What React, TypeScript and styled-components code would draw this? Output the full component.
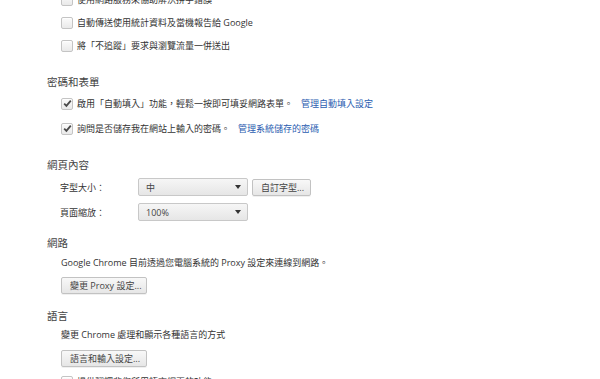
import styled, { createGlobalStyle } from "styled-components";

const GlobalStyle = createGlobalStyle`
  html, body {
    margin: 0;
    padding: 0;
    background: #fff;
    overflow: hidden;
  }
  body {
    font-family: "Open Sans", "Noto Sans CJK TC", sans-serif;
    color: #333;
  }
`;

const Page = styled.div`
  width: 600px;
  height: 379px;
  overflow: hidden;
`;

// content is scrolled a little, so the first row is cut at the top
const Scroller = styled.div`
  display: flex;
  flex-direction: column;
  margin-top: -12px;
  padding-left: 47px;
`;

const Section = styled.section`
  display: flex;
  flex-direction: column;
  margin-bottom: 14px;
`;

const Title = styled.h3`
  margin: 0;
  height: 16px;
  line-height: 16px;
  font-size: 10.5px;
  font-weight: normal;
  color: #444;
`;

const Body = styled.div<{ $top?: number }>`
  display: flex;
  flex-direction: column;
  margin-left: 14px;
  margin-top: ${(p) => p.$top ?? 0}px;
`;

const CheckList = styled.div<{ $gap?: number; $top?: number }>`
  display: flex;
  flex-direction: column;
  gap: ${(p) => p.$gap ?? 0}px;
  margin-top: ${(p) => p.$top ?? 0}px;
  margin-bottom: 3px;
  margin-left: 14px;
`;

const CheckRow = styled.label`
  display: flex;
  align-items: center;
  height: 23px;
  font-size: 9px;
  color: #333;
  white-space: nowrap;
`;

const Box = styled.span`
  position: relative;
  flex: none;
  width: 10px;
  height: 10px;
  margin-right: 4px;
  border: 1px solid #c4c4c4;
  border-radius: 2px;
  background: linear-gradient(#fbfbfb, #e9e9e9);
  box-shadow: inset 0 1px 1px rgba(255, 255, 255, 0.8);
`;

const Tick = styled.svg`
  position: absolute;
  left: 1px;
  top: 0px;
`;

const Link = styled.a`
  margin-left: 8px;
  color: #2a5db0;
  text-decoration: none;
`;

const FormRows = styled.div`
  display: flex;
  flex-direction: column;
  gap: 7px;
  margin-left: 13px;
  margin-top: 5px;
`;

const FormRow = styled.div`
  display: flex;
  align-items: center;
  height: 18px;
  gap: 4px;
  font-size: 9px;
`;

const Label = styled.span`
  width: 74px;
  color: #333;
`;

const Select = styled.div<{ $width: number }>`
  display: flex;
  align-items: center;
  justify-content: space-between;
  box-sizing: border-box;
  width: ${(p) => p.$width}px;
  height: 18px;
  padding: 0 6px 0 7px;
  border: 1px solid #c8c8c8;
  border-radius: 2px;
  background: linear-gradient(#f6f6f6, #e6e6e6);
  color: #444;
  font-size: 9px;
`;

const Arrow = styled.span`
  width: 0;
  height: 0;
  border-left: 3px solid transparent;
  border-right: 3px solid transparent;
  border-top: 4px solid #333;
`;

const Button = styled.button<{ $width: number; $top?: number }>`
  display: block;
  box-sizing: border-box;
  width: ${(p) => p.$width}px;
  height: 17px;
  margin: ${(p) => p.$top ?? 0}px 0 0 0;
  padding: 0 8px;
  border: 1px solid #c2c2c2;
  border-radius: 2px;
  background: linear-gradient(#f8f8f8, #e6e6e6);
  box-shadow: 0 1px 0 rgba(0, 0, 0, 0.06);
  color: #444;
  font-family: inherit;
  font-size: 9px;
  text-align: left;
  white-space: nowrap;
`;

const Text = styled.div<{ $top?: number }>`
  height: 16px;
  line-height: 16px;
  margin-top: ${(p) => p.$top ?? 0}px;
  font-size: 9px;
  color: #333;
  white-space: nowrap;
`;

function Check({ checked, children }: { checked?: boolean; children: React.ReactNode }) {
  return (
    <CheckRow>
      <Box>
        {checked && (
          <Tick width="9" height="9" viewBox="0 0 9 9">
            <path d="M1.2 4.6 L3.4 6.8 L7.8 1.6" fill="none" stroke="#4a4a4a" strokeWidth="1.8" />
          </Tick>
        )}
      </Box>
      {children}
    </CheckRow>
  );
}

export default function App() {
  return (
    <Page>
      <GlobalStyle />
      <Scroller>
        <Section>
          <CheckList>
            <Check>使用網路服務來協助解決拼字錯誤</Check>
            <Check>自動傳送使用統計資料及當機報告給 Google</Check>
            <Check>將「不追蹤」要求與瀏覽流量一併送出</Check>
          </CheckList>
        </Section>

        <Section>
          <Title>密碼和表單</Title>
          <CheckList $gap={2} $top={2}>
            <Check checked>
              啟用「自動填入」功能，輕鬆一按即可填妥網路表單。
              <Link href="#">管理自動填入設定</Link>
            </Check>
            <Check checked>
              詢問是否儲存我在網站上輸入的密碼。
              <Link href="#">管理系統儲存的密碼</Link>
            </Check>
          </CheckList>
        </Section>

        <Section>
          <Title>網頁內容</Title>
          <FormRows>
            <FormRow>
              <Label>字型大小：</Label>
              <Select $width={110}>
                中<Arrow />
              </Select>
              <Button $width={59}>自訂字型...</Button>
            </FormRow>
            <FormRow>
              <Label>頁面縮放：</Label>
              <Select $width={110}>
                100%<Arrow />
              </Select>
            </FormRow>
          </FormRows>
        </Section>

        <Section>
          <Title>網路</Title>
          <Body $top={4}>
            <Text>Google Chrome 目前透過您電腦系統的 Proxy 設定來連線到網路。</Text>
            <Button $width={86} $top={6}>變更 Proxy 設定...</Button>
          </Body>
        </Section>

        <Section>
          <Title>語言</Title>
          <Body $top={3}>
            <Text>變更 Chrome 處理和顯示各種語言的方式</Text>
            <Button $width={86} $top={7}>語言和輸入設定...</Button>
          </Body>
          <CheckList $top={3}>
            <Check>提供翻譯非您所用語言網頁的功能</Check>
          </CheckList>
        </Section>
      </Scroller>
    </Page>
  );
}
